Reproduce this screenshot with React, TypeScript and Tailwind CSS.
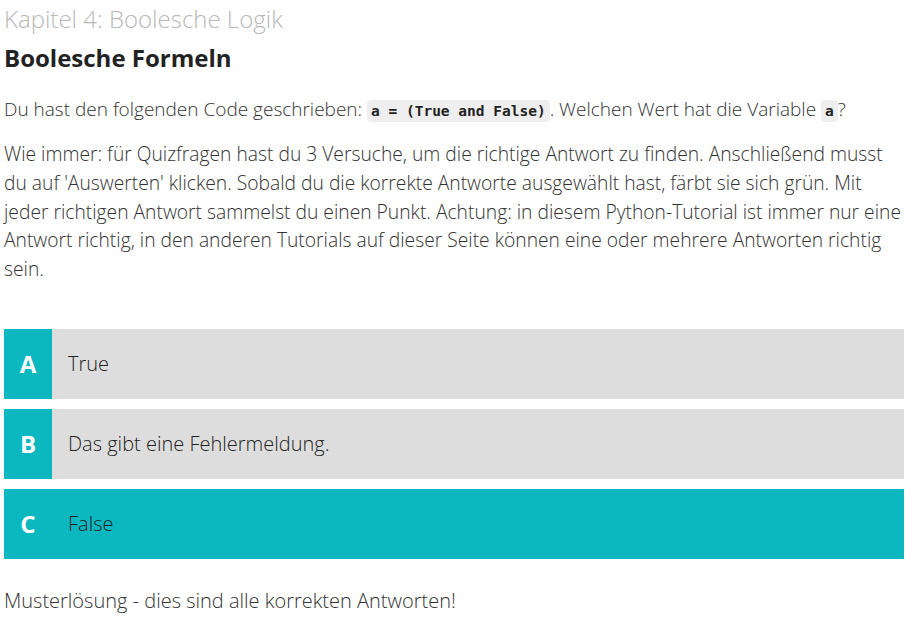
const answers = [
  { letter: 'A', text: 'True', correct: false },
  { letter: 'B', text: 'Das gibt eine Fehlermeldung.', correct: false },
  { letter: 'C', text: 'False', correct: true },
];

function Code({ children }: { children: string }) {
  return (
    <code className="rounded-[4px] bg-[#eeeeee] px-[4px] py-[3px] font-['DejaVu_Sans_Mono',monospace] text-[14.5px] font-semibold text-[#222]">
      {children}
    </code>
  );
}

export default function App() {
  return (
    <div className="min-h-[620px] bg-white px-[4px] font-['Open_Sans',sans-serif] text-[#333]">
      <div className="w-[900px]">
        <div className="pt-[2px] text-[24px] font-light leading-[34px] text-[#b8b8b8]">
          Kapitel 4: Boolesche Logik
        </div>
        <h1 className="mt-[6px] text-[24px] font-bold leading-[32px] text-[#222]">Boolesche Formeln</h1>

        <p className="mt-[21px] text-[19px] font-light leading-[29px]">
          Du hast den folgenden Code geschrieben: <Code>a = (True and False)</Code>. Welchen Wert hat die Variable{' '}
          <Code>a</Code>?
        </p>
        <p className="mt-[14px] text-[19.25px] font-light leading-[28.8px]">
          Wie immer: für Quizfragen hast du 3 Versuche, um die richtige Antwort zu finden. Anschließend musst du auf
          'Auswerten' klicken. Sobald du die korrekte Antworte ausgewählt hast, färbt sie sich grün. Mit jeder richtigen
          Antwort sammelst du einen Punkt. Achtung: in diesem Python-Tutorial ist immer nur eine Antwort richtig, in den
          anderen Tutorials auf dieser Seite können eine oder mehrere Antworten richtig sein.
        </p>

        <div className="mt-[45px] flex flex-col gap-[10px]">
          {answers.map((a) => (
            <div key={a.letter} className={`flex h-[70px] items-center ${a.correct ? 'bg-[#0cb8bf]' : 'bg-[#dddddd]'}`}>
              <div className="flex h-full w-[48px] items-center justify-center bg-[#0cb8bf] text-[24px] font-bold text-white">
                {a.letter}
              </div>
              <div className="pl-[16px] text-[20px] font-light text-[#222]">{a.text}</div>
            </div>
          ))}
        </div>

        <p className="mt-[27px] text-[20px] font-light leading-[29px]">
          Musterlösung - dies sind alle korrekten Antworten!
        </p>
      </div>
    </div>
  );
}
